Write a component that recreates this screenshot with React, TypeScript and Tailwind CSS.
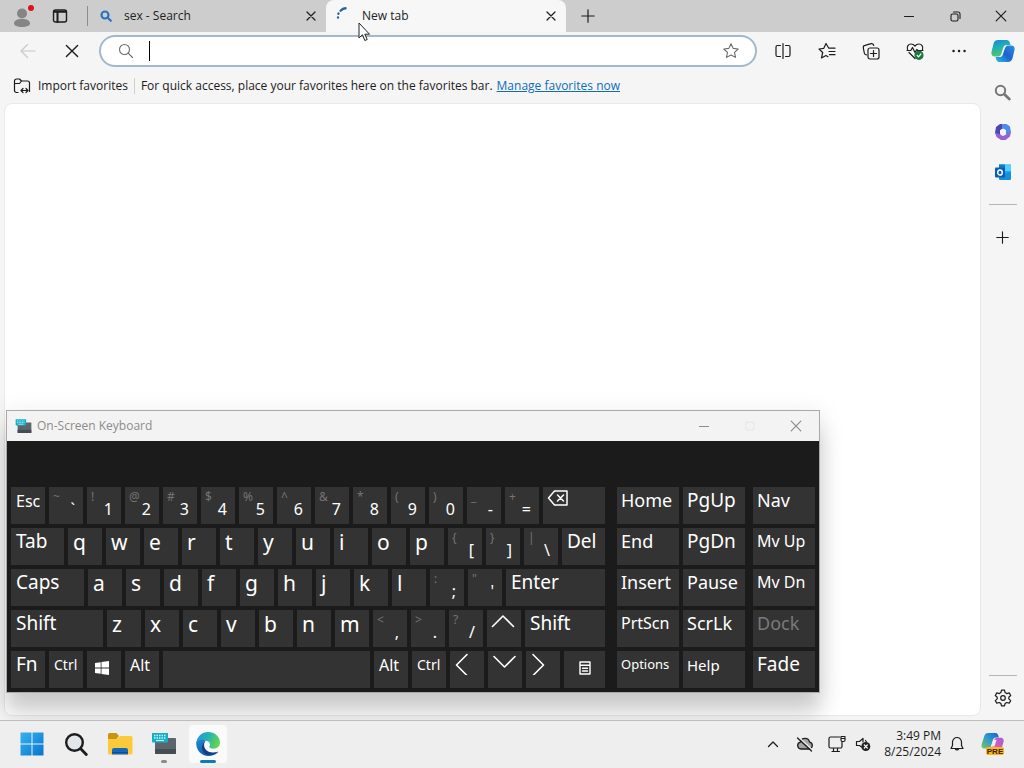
import type { ReactNode } from "react";

type IconProps = { size?: number; box?: string; sw?: number; className?: string; children: ReactNode };

function Icon({ size = 20, box, sw = 1.2, className = "", children }: IconProps) {
  return (
    <svg
      width={size}
      height={size}
      viewBox={box ?? `0 0 ${size} ${size}`}
      fill="none"
      stroke="currentColor"
      strokeWidth={sw}
      strokeLinecap="round"
      strokeLinejoin="round"
      aria-hidden="true"
      className={`shrink-0 ${className}`}
    >
      {children}
    </svg>
  );
}

const Cross = ({ size = 10, sw = 1.3 }: { size?: number; sw?: number }) => (
  <Icon size={size} box="0 0 10 10" sw={sw}>
    <path d="M1 1l8 8M9 1L1 9" />
  </Icon>
);

const Plus = ({ size = 14 }: { size?: number }) => (
  <Icon size={size} box="0 0 14 14" sw={1.2}>
    <path d="M7 .8v12.4M.8 7h12.4" />
  </Icon>
);

const STAR = "M10 2l2.400 5.100 5.600.7-4.100 3.800 1.100 5.500L10 14.400l-5 2.700 1.100-5.500L2 7.800l5.600-.7z";

const CopilotLogo = ({ size = 24 }: { size?: number }) => (
  <svg width={size} height={size} viewBox="0 0 24 24" aria-hidden="true" className="shrink-0">
    <defs>
      <linearGradient id="cpA" x1="0" y1="0" x2="0.3" y2="1">
        <stop offset="0" stopColor="#1a86d8" />
        <stop offset="0.45" stopColor="#1eaeb8" />
        <stop offset="1" stopColor="#56c46a" />
      </linearGradient>
      <linearGradient id="cpB" x1="1" y1="0" x2="0" y2="1">
        <stop offset="0" stopColor="#2e8fe0" />
        <stop offset="0.5" stopColor="#1c62d0" />
        <stop offset="1" stopColor="#2cc0f0" />
      </linearGradient>
    </defs>
    <path d="M7 1h8.500c1.800 0 2.800 1.100 3.300 2.600L19.500 6h-4c-1.700 0-2.700 1-3.200 2.600l-1.900 6.200c-.5 1.600-1.400 2.700-3.200 2.700H3.800C.8 17.500-.1 15 .6 12.500L2.500 4.700C3.100 2.400 4.600 1 7 1z" fill="url(#cpA)" />
    <path d="M17 23H8.500c-1.800 0-2.800-1.100-3.300-2.600L4.500 18h4c1.700 0 2.700-1 3.200-2.600l1.900-6.200c.5-1.600 1.400-2.700 3.200-2.700h3.400c3 0 3.900 2.500 3.200 5l-1.900 7.800c-.6 2.300-2.100 3.700-4.500 3.700z" fill="url(#cpB)" />
    <path d="M14 6.700l-2.300 6.500-2 4.400 1.600-1 2.500-7.400 2-2.700z" fill="#e9fbff" />
  </svg>
);

const CopilotPre = () => (
  <svg width="26" height="26" viewBox="0 0 26 26" aria-hidden="true">
    <defs>
      <linearGradient id="preA" x1="1" y1="0" x2="0" y2="1">
        <stop offset="0" stopColor="#1d5fc8" />
        <stop offset="0.5" stopColor="#2e9bd0" />
        <stop offset="1" stopColor="#7ac850" />
      </linearGradient>
      <linearGradient id="preB" x1="1" y1="0" x2="0" y2="1">
        <stop offset="0" stopColor="#a45ce0" />
        <stop offset="0.6" stopColor="#e060a8" />
        <stop offset="1" stopColor="#f8a040" />
      </linearGradient>
    </defs>
    <path d="M8.500 2h7c2 0 2.700 1.500 3.400 4.500h-3c-1.800 0-2.500 1-3 2.600l-2 6.200c-.5 1.500-1.300 2.200-3 2.200H4.500c-2.800 0-3.500-2.300-2.700-4.800L4.200 5.200C4.900 3 6.200 2 8.500 2z" fill="url(#preA)" />
    <path d="M17 22H10c-2 0-3-1.500-3.500-4.200h2.400c1.700 0 2.500-1 3-2.500l2-6c.5-1.600 1.300-2.500 3-2.500h3.800c2.800 0 3.400 2.400 2.700 4.800l-2.200 7.200c-.6 2-2 3.200-4.200 3.200z" fill="url(#preB)" />
    <path d="M13.500 8.500l-2.300 7h3.300l2-6.500z" fill="#f6e8ff" />
    <rect x="6" y="16" width="18" height="8" rx="2" fill="#fbb51d" />
    <text x="15" y="23" textAnchor="middle" fontFamily="Liberation Sans, sans-serif" fontWeight="700" fontSize="8" fill="#3a2400">PRE</text>
  </svg>
);

const KeyboardLogo = ({ size }: { size: number }) => (
  <svg width={size} height={size} viewBox="0 0 26 26" aria-hidden="true" className="shrink-0">
    <rect x="4" y="7" width="21" height="16" rx="1" fill="#5c646c" />
    <path d="M4 18h21v4a1 1 0 0 1-1 1H5a1 1 0 0 1-1-1z" fill="#454c54" />
    <path d="M1 2h16v8.500a1 1 0 0 1-1 1H2a1 1 0 0 1-1-1z" fill="#16aec4" />
    <path d="M3 4.500h12M3 7h12" stroke="#c9f7fb" strokeWidth="1.3" strokeDasharray="1.5 1" />
    <path d="M5 9.500h8" stroke="#c9f7fb" strokeWidth="1.2" />
  </svg>
);

const EdgeLogo = () => (
  <svg width="26" height="26" viewBox="0 0 26 26" aria-hidden="true">
    <defs>
      <linearGradient id="edA" x1="0" y1="0.2" x2="1" y2="0.5">
        <stop offset="0" stopColor="#2296dc" />
        <stop offset="0.5" stopColor="#27b4ae" />
        <stop offset="1" stopColor="#66d650" />
      </linearGradient>
      <linearGradient id="edB" x1="0" y1="0" x2="0.8" y2="1">
        <stop offset="0" stopColor="#1b8ad6" />
        <stop offset="1" stopColor="#124f9c" />
      </linearGradient>
    </defs>
    <path d="M1.200 12C2 5.500 7 1 13 1c7 0 12 5 12 10.500 0 4-3 6.200-6.500 6.200-3 0-4.600-1.200-4.200-2.200 1.200-1.200 1.200-4.500-2.300-5.500-4-1.300-8.500.2-10.800 2z" fill="url(#edA)" />
    <path d="M1.200 11.500C3.500 8.500 8 8 11 9.800c-3.300 1.500-4.200 5-2.800 8.200 1.800 4 7 5.300 12 3.600.8-.3 1.500-.5 2.200-.9.500-.2.900.2.600.6C20.500 24 17 25 13.500 25 6.500 25 1 19.500 1.200 11.500z" fill="url(#edB)" />
    <path d="M11 9.800c-2.500 2-2.500 5.700-.5 8.400 2.300 3 7 4 11 2.700-2 2.600-6.500 3.700-10.500 2.300C6 21 5 12.500 11 9.800z" fill="#123f84" />
  </svg>
);

function Tab({ title, icon, active }: { title: string; icon: ReactNode; active?: boolean }) {
  return (
    <div
      className={`flex h-8 items-center pr-[7px] pl-2 text-[12px] text-[#222] ${
        active ? "w-60 rounded-t-lg bg-[#f7f7f7]" : "w-[238px]"
      }`}
    >
      <span className="mr-2 flex w-5 justify-center">{icon}</span>
      <span className="flex-1 truncate">{title}</span>
      <button aria-label={`Close ${title}`} className="flex size-4 items-center justify-center text-[#222]">
        <Cross />
      </button>
    </div>
  );
}

function ToolButton({ label, children, className = "" }: { label: string; children: ReactNode; className?: string }) {
  return (
    <button aria-label={label} className={`flex h-8 w-11 shrink-0 items-center justify-center text-[#1d1d1d] ${className}`}>
      {children}
    </button>
  );
}

type KeyDef = {
  k?: string;
  shift?: string;
  w?: string;
  size?: string;
  icon?: ReactNode;
  label?: string;
  dim?: boolean;
  place?: string;
};

const N = "w-[34px]";
const L = "text-[21px] leading-7";
const W = "text-[19px] leading-[26px]";
const M = "text-[18px] leading-[26px]";
const S = "text-[16px] leading-[26px]";
const T = "text-[14px] leading-7";

function Key({ k, shift, w = N, size = L, icon, label, dim, place = "items-start pl-1" }: KeyDef) {
  const base = `h-[37px] shrink-0 bg-[#333333] ${w}`;
  if (icon || !k) {
    return (
      <button aria-label={label} className={`${base} flex text-white ${place}`}>
        {icon}
      </button>
    );
  }
  if (shift) {
    return (
      <button className={`${base} flex flex-col justify-start text-white`}>
        <span className="h-3.5 self-start pt-[3px] pl-1 text-[12px] leading-[14px] text-[#737373]">{shift}</span>
        <span className="self-end pr-2 text-[16px] leading-4">{k}</span>
      </button>
    );
  }
  return (
    <button
      className={`${base} flex items-start whitespace-nowrap ${w === SIDE ? "pl-1" : "pl-[5px]"} ${size} ${
        dim ? "text-[#7a7a7a]" : "text-white"
      }`}
    >
      {k}
    </button>
  );
}

const Chevron = ({ d }: { d: string }) => (
  <Icon size={24} sw={1.6}>
    <path d={d} />
  </Icon>
);

const letters = (s: string): KeyDef[] => s.split("").map((k) => ({ k }));

const rows: KeyDef[][] = [
  [
    { k: "Esc", size: "text-[16px] leading-7" },
    { k: "`", shift: "~" },
    { k: "1", shift: "!" },
    { k: "2", shift: "@" },
    { k: "3", shift: "#" },
    { k: "4", shift: "$" },
    { k: "5", shift: "%" },
    { k: "6", shift: "^" },
    { k: "7", shift: "&" },
    { k: "8", shift: "*" },
    { k: "9", shift: "(" },
    { k: "0", shift: ")" },
    { k: "-", shift: "_" },
    { k: "=", shift: "+" },
    {
      label: "Backspace",
      w: "w-[62px]",
      icon: (
        <Icon size={22} sw={1.5}>
          <path d="M7.500 4H20v14H7.500L1.500 11z M10.500 8l6 6M16.500 8l-6 6" />
        </Icon>
      ),
    },
  ],
  [
    { k: "Tab", w: "w-[53px]", size: W },
    ...letters("qwertyuiop"),
    { k: "[", shift: "{" },
    { k: "]", shift: "}" },
    { k: "\\", shift: "|" },
    { k: "Del", w: "w-[43px]", size: W },
  ],
  [
    { k: "Caps", w: "w-[73px]", size: W },
    ...letters("asdfghjkl"),
    { k: ";", shift: ":" },
    { k: "'", shift: "\"" },
    { k: "Enter", w: "w-[99px]", size: W },
  ],
  [
    { k: "Shift", w: "w-[92px]", size: W },
    ...letters("zxcvbnm"),
    { k: ",", shift: "<" },
    { k: ".", shift: ">" },
    { k: "/", shift: "?" },
    { label: "Up", icon: <Chevron d="M1.500 16.500L12 6l10.500 10.500" /> },
    { k: "Shift", w: "w-20", size: W },
  ],
  [
    { k: "Fn", size: W },
    { k: "Ctrl", size: T },
    {
      label: "Windows",
      place: "items-center justify-center pr-1 pb-1",
      icon: (
        <svg width="14" height="14" viewBox="0 0 14 14" fill="#fff" aria-hidden="true">
          <path d="M0 2l5.700-.8v5.300H0zM6.500 1L14 0v6.500H6.500zM0 7.400h5.700v5.300L0 11.900zM6.500 7.400H14V14l-7.500-1.100z" />
        </svg>
      ),
    },
    { k: "Alt", size: "text-[16px] leading-7" },
    { label: "Space", w: "w-[207px]" },
    { k: "Alt", size: "text-[16px] leading-7" },
    { k: "Ctrl", size: T },
    { label: "Left", icon: <Chevron d="M13 3.500L2.500 14 13 24.500" /> },
    { label: "Down", icon: <Chevron d="M2 5.500L12.500 16 23 5.500" /> },
    { label: "Right", icon: <Chevron d="M3 3.500L13.500 14 3 24.500" /> },
    {
      label: "Menu",
      w: "w-[41px]",
      place: "items-center justify-center pb-1",
      icon: (
        <Icon size={14} sw={1.4}>
          <path d="M2 1h10v12H2zM2 4.200h10M4.500 7.200h5M4.500 10h5" />
        </Icon>
      ),
    },
  ],
];

const SIDE = "w-[62px]";
const sideRows: KeyDef[][] = [
  [{ k: "Home", w: SIDE, size: M }, { k: "PgUp", w: SIDE, size: W }, { k: "Nav", w: SIDE, size: M }],
  [{ k: "End", w: SIDE, size: M }, { k: "PgDn", w: SIDE, size: W }, { k: "Mv Up", w: SIDE, size: S }],
  [{ k: "Insert", w: SIDE, size: M }, { k: "Pause", w: SIDE, size: M }, { k: "Mv Dn", w: SIDE, size: S }],
  [{ k: "PrtScn", w: SIDE, size: S }, { k: "ScrLk", w: SIDE, size: M }, { k: "Dock", w: SIDE, size: M, dim: true }],
  [
    { k: "Options", w: SIDE, size: "text-[13px] leading-[26px]" },
    { k: "Help", w: SIDE, size: "text-[15px] leading-7" },
    { k: "Fade", w: SIDE, size: W },
  ],
];

function OnScreenKeyboard() {
  return (
    <section
      aria-label="On-Screen Keyboard"
      className="absolute top-[410px] left-[6px] z-10 border border-[#a9a9a9] shadow-[0_20px_20px_0_rgba(0,0,0,0.17),0_4px_24px_2px_rgba(0,0,0,0.08)]"
    >
      <header className="flex h-[30px] items-center bg-[#f3f3f3] pl-2 text-[12px] text-[#8c8c8c]">
        <KeyboardLogo size={17} />
        <h2 className="ml-[5px] flex-1">On-Screen Keyboard</h2>
        <button aria-label="Minimize" className="flex h-full w-[46px] items-center justify-center">
          <Icon size={10} sw={1}>
            <path d="M0 5.500h10" />
          </Icon>
        </button>
        <button aria-label="Maximize" disabled className="flex h-full w-[46px] items-center justify-center text-[#e6e6e6]">
          <Icon size={10} sw={1}>
            <rect x="1" y="1" width="8" height="8" rx="1" />
          </Icon>
        </button>
        <button aria-label="Close keyboard" className="flex h-full w-[46px] items-center justify-center">
          <Cross size={12} sw={1} />
        </button>
      </header>
      <div className="flex flex-col gap-1 bg-[#1b1b1b] px-1 pt-[46px] pb-1 font-['Noto_Sans',sans-serif]">
        {rows.map((row, r) => (
          <div key={r} className="flex">
            <div className="flex gap-1">
              {row.map((key, i) => (
                <Key key={i} {...key} />
              ))}
            </div>
            <div className="ml-auto flex gap-1 pl-3">
              <Key {...sideRows[r][0]} />
              <Key {...sideRows[r][1]} />
              <div className="pl-1">
                <Key {...sideRows[r][2]} />
              </div>
            </div>
          </div>
        ))}
      </div>
    </section>
  );
}

function TabStrip() {
  return (
    <header className="flex h-8 items-center bg-[#cdcdcd] text-[#1d1d1d]">
      <button aria-label="Profile" className="flex h-8 w-[42px] items-center justify-center pl-0.5">
        <svg width="24" height="24" viewBox="0 0 24 24" aria-hidden="true">
          <circle cx="12" cy="9.500" r="5" fill="#858585" />
          <path d="M4 19.500c0-3.300 3.500-4.500 8-4.500s8 1.200 8 4.500c0 1.800-3 3.500-8 3.500s-8-1.700-8-3.500z" fill="#858585" />
          <circle cx="21" cy="4" r="3" fill="#e0101c" />
        </svg>
      </button>
      <button aria-label="Tab actions" className="flex h-8 w-9 items-center justify-center">
        <Icon size={16} sw={1.4}>
          <rect x="1.500" y="2" width="13" height="12" rx="2" />
          <path d="M2 3.800h12M5.500 4v10" strokeWidth="2" />
        </Icon>
      </button>
      <div className="ml-[9px] h-5 w-px bg-[#8d8d8d]" />
      <Tab
        title="sex - Search"
        icon={
          <Icon size={12} sw={2.2} className="text-[#2f72c0]">
            <circle cx="5" cy="5" r="3.500" />
            <path d="M7.800 7.800l3 3" />
          </Icon>
        }
      />
      <Tab
        active
        title="New tab"
        icon={
          <Icon size={16} sw={2.4} className="mb-1 text-[#2a6494]">
            <path d="M2 11.500v.1M2.400 7.800l.1-.2M4.600 4.700C6 3.200 7.500 2.400 9.500 2.300" />
          </Icon>
        }
      />
      <button aria-label="New tab" className="ml-1 flex h-8 w-9 items-center justify-center">
        <Plus />
      </button>
      <div className="ml-auto flex h-8">
        <button aria-label="Minimize" className="flex w-[46px] items-center justify-center">
          <Icon size={10} sw={1.1}>
            <path d="M.5 5.500h9" />
          </Icon>
        </button>
        <button aria-label="Restore" className="flex w-[46px] items-center justify-center">
          <Icon size={11} sw={1.1}>
            <rect x="1" y="3" width="7" height="7" rx="1.500" />
            <path d="M3.500 1H8a2 2 0 0 1 2 2v4.500" />
          </Icon>
        </button>
        <button aria-label="Close" className="flex w-[46px] items-center justify-center">
          <Cross size={12} sw={1} />
        </button>
      </div>
    </header>
  );
}

function Toolbar() {
  return (
    <div className="flex h-[38px] items-center pl-1.5">
      <ToolButton label="Back" className="opacity-20">
        <Icon size={16} sw={1.2}>
          <path d="M15 8H1M7.500 1.500L1 8l6.500 6.500" />
        </Icon>
      </ToolButton>
      <ToolButton label="Stop">
        <Cross size={14} sw={1} />
      </ToolButton>
      <div className="mr-1 ml-[5px] flex h-8 flex-1 items-center rounded-full border-2 border-[#a3b8cc] bg-white pr-[15px] pl-[17px] text-[#6b6b6b]">
        <Icon size={16} sw={1.1}>
          <circle cx="6.500" cy="6.500" r="5" />
          <path d="M10.200 10.200L14.500 14.500" />
        </Icon>
        <span className="ml-[15px] h-5 w-px bg-black" />
        <input aria-label="Address and search bar" className="h-6 min-w-0 flex-1 bg-transparent text-[14px] outline-none" />
        <button aria-label="Add to favorites">
          <Icon size={18} box="0 0 20 20">
            <path d={STAR} />
          </Icon>
        </button>
      </div>
      <ToolButton label="Split screen">
        <Icon size={18} sw={1.2}>
          <path d="M6.500 3.500h-3a1.500 1.500 0 0 0-1.500 1.500v8a1.500 1.500 0 0 0 1.500 1.500h3M11.500 3.500h3A1.500 1.500 0 0 1 16 5v8a1.500 1.500 0 0 1-1.500 1.500h-3M9 1.500v15" />
        </Icon>
      </ToolButton>
      <ToolButton label="Favorites">
        <Icon size={18} sw={1.2}>
          <path d="M17 6.200h-6.200L8 1.500 5.800 6.300 1 7l3.700 3.500L3.500 16 8 13.500l2 1.200M11 9.500h6M11.500 12.700H17" />
        </Icon>
      </ToolButton>
      <ToolButton label="Collections">
        <Icon size={18} sw={1.2}>
          <rect x="6" y="6" width="11" height="11" rx="2" />
          <path d="M11.500 8.500v6M8.500 11.500h6M4.500 12.800A2.200 2.200 0 0 1 2.300 11L1.300 5.800a2.200 2.200 0 0 1 1.800-2.500l6-1.600a2.200 2.200 0 0 1 2.600 1.800" />
        </Icon>
      </ToolButton>
      <ToolButton label="Browser essentials">
        <Icon size={18} sw={1.2}>
          <path d="M1.500 7.500C.6 4.500 2.400 2 5 2c1.700 0 3 .8 4 2 1-1.200 2.300-2 4-2 2.600 0 4.400 2.500 3.500 5.500M1 8.500h3.800l1.700-3 2.500 5 1.800-3 .9 1H17M3 10.500l6 6" />
          <circle cx="13" cy="13.300" r="4" fill="#187a3d" stroke="#187a3d" />
          <path d="M11.200 13.500l1.300 1.300 2.400-2.800" stroke="#fff" />
        </Icon>
      </ToolButton>
      <ToolButton label="Settings and more">
        <Icon size={16} sw={2.4}>
          <path d="M2.500 8h.1M8 8h.1M13.500 8h.1" />
        </Icon>
      </ToolButton>
    </div>
  );
}

function FavoritesBar() {
  return (
    <div className="flex h-[33px] items-center pb-0.5 pl-[13px] text-[12px] whitespace-nowrap text-[#1b1b1b]">
      <button className="flex items-center gap-[7px]">
        <Icon size={18} sw={1.2}>
          <path d="M5 15.500H3.500A2 2 0 0 1 1.500 13.500V4a2 2 0 0 1 2-2h3l2 2h6a2 2 0 0 1 2 2v8.500M1.500 6.500h5l2-2.500M8 13.500h7M10 11.500l-2 2 2 2M13 11.500l2 2-2 2" />
        </Icon>
        Import favorites
      </button>
      <span className="mx-1.5 h-4 w-px bg-[#d0d0d0]" />
      <span>For quick access, place your favorites here on the favorites bar.</span>
      <a href="#favorites" className="ml-1 text-[#0f6cbd] underline">
        Manage favorites now
      </a>
    </div>
  );
}

function SideBar() {
  return (
    <aside className="flex w-[43px] shrink-0 flex-col items-center pt-[3px]">
      <ToolButton label="Copilot">
        <CopilotLogo />
      </ToolButton>
      <div className="mt-[9px] flex flex-col gap-2">
        <ToolButton label="Search">
          <Icon size={17} sw={2} className="text-[#777]">
            <circle cx="6.500" cy="6.500" r="4.700" />
            <path d="M10.300 10.300l5 4.700" strokeWidth="2.8" />
          </Icon>
        </ToolButton>
        <ToolButton label="Microsoft 365">
          <svg width="18" height="18" viewBox="0 0 18 18" aria-hidden="true">
            <path d="M9.500 1H6L2 4 1 10l2 3 3.500-1.500V7L12 4z" fill="#4c46b4" />
            <path d="M8 1h4.500L16 3.500l1 6-3 3-2.500-1.500V7L8 5z" fill="#4a8ee6" />
            <path d="M17 8.500l-1 5L11.500 17H7l-4.500-3L1 9.500 6 11.500 9 13l4-2z" fill="#9a5fd6" />
            <path d="M9 5.500l3 1.700v3.600l-3 1.700-3-1.700V7.200z" fill="#f4f3ff" />
          </svg>
        </ToolButton>
        <ToolButton label="Outlook">
          <svg width="18" height="18" viewBox="0 0 18 18" aria-hidden="true">
            <path d="M5 1.500h11a1 1 0 0 1 1 1V16H5z" fill="#28a8ea" />
            <path d="M11 1.500h6V8h-6z" fill="#50d0ff" />
            <path d="M5 1.500h6V8H5z" fill="#0f78d4" />
            <path d="M5 11l12-2v7a1 1 0 0 1-1 1H6a1 1 0 0 1-1-1z" fill="#1490df" />
            <rect x="1" y="4.500" width="10" height="10" rx="1" fill="#0a5eb0" />
            <ellipse cx="6" cy="9.500" rx="2.300" ry="2.600" fill="none" stroke="#fff" strokeWidth="1.5" />
          </svg>
        </ToolButton>
      </div>
      <span className="mt-4 h-px w-7 bg-[#b5b5b5]" />
      <ToolButton label="Customize" className="mt-4">
        <Plus size={13} />
      </ToolButton>
      <span className="mt-auto h-px w-7 bg-[#b5b5b5]" />
      <ToolButton label="Settings" className="mt-1.5 mb-1.5">
        <Icon size={18} sw={1.2}>
          <circle cx="9" cy="9" r="2.300" />
          <path d="M7.500 1.200h3l.6 2.400 1.600 1 2.500-.7 1.500 2.600-1.900 1.700v1.700l1.900 1.700-1.500 2.600-2.500-.7-1.600 1-.6 2.400h-3l-.6-2.400-1.600-1-2.500.7-1.500-2.600 1.900-1.700V8.200L1.300 6.500l1.500-2.600 2.500.7 1.600-1z" />
        </Icon>
      </ToolButton>
    </aside>
  );
}

function TaskButton({ label, children, active }: { label: string; children: ReactNode; active?: boolean }) {
  return (
    <button
      aria-label={label}
      className={`relative flex size-[38px] items-center justify-center rounded ${active ? "bg-[#fafafa]" : ""}`}
    >
      {children}
    </button>
  );
}

function Taskbar() {
  return (
    <footer className="relative z-20 flex h-12 items-center border-t border-[#bdbdbd] bg-[#eeeeee] pr-[18px] pb-px pl-[13px] text-[#1d1d1d]">
      <nav className="flex gap-1.5" aria-label="Taskbar">
        <TaskButton label="Start">
          <svg width="24" height="24" viewBox="0 0 24 24" aria-hidden="true">
            <defs>
              <linearGradient id="winG" x1="0" y1="0" x2="1" y2="1">
                <stop offset="0" stopColor="#35b4ee" />
                <stop offset="1" stopColor="#0873cf" />
              </linearGradient>
            </defs>
            <path d="M.5.5h11v11H.5zM12.500.5h11v11h-11zM.5 12.500h11v11H.5zM12.500 12.500h11v11h-11z" fill="url(#winG)" />
          </svg>
        </TaskButton>
        <TaskButton label="Search">
          <Icon size={24} sw={2.4}>
            <circle cx="10.500" cy="10.500" r="8.300" fill="#e3e7e9" />
            <path d="M16.700 16.700l5.600 5.800" strokeWidth="2.8" />
          </Icon>
        </TaskButton>
        <TaskButton label="File Explorer">
          <svg width="26" height="26" viewBox="0 0 26 26" aria-hidden="true">
            <path d="M1 3.500A1.500 1.500 0 0 1 2.500 2h7l2.500 3-2.500 3H1z" fill="#c99510" />
            <path d="M1 8h9l3-3h11a1.500 1.500 0 0 1 1.500 1.500V22a1.500 1.500 0 0 1-1.500 1.500H2.500A1.500 1.500 0 0 1 1 22z" fill="#fcc93a" />
            <path d="M5 23.500V19a2 2 0 0 1 2-2h12a2 2 0 0 1 2 2v4.500z" fill="#1668b8" />
            <path d="M5 21.500h16" stroke="#0e4d8c" />
          </svg>
        </TaskButton>
        <TaskButton label="On-Screen Keyboard">
          <KeyboardLogo size={26} />
          <span className="absolute bottom-0 h-[3px] w-1.5 rounded-full bg-[#8b8b8b]" />
        </TaskButton>
        <TaskButton label="Microsoft Edge" active>
          <EdgeLogo />
          <span className="absolute bottom-0 h-[3px] w-4 rounded-full bg-[#0f7ab8]" />
        </TaskButton>
      </nav>
      <div className="ml-auto flex items-center">
        <button aria-label="Show hidden icons" className="flex w-8 justify-center">
          <Icon size={12} sw={1.3}>
            <path d="M1.500 8.500L6 4l4.500 4.500" />
          </Icon>
        </button>
        <button aria-label="OneDrive" className="flex w-8 justify-center">
          <Icon size={18} sw={1.3}>
            <path d="M5 14a3.500 3.500 0 0 1-.6-6.900 4.700 4.700 0 0 1 9.200 0A3.500 3.500 0 0 1 13 14z" fill="#a6a6a6" />
            <path d="M2.500 2l14 13" stroke="#eee" strokeWidth="1.4" />
            <path d="M1.500 3l14 13" />
          </Icon>
        </button>
        <button aria-label="Network" className="flex w-8 justify-center">
          <Icon size={18} sw={1.2}>
            <path d="M11.500 2H2.500A1.500 1.500 0 0 0 1 3.500v8A1.500 1.500 0 0 0 2.500 13h10a1.500 1.500 0 0 0 1.500-1.500V7M5.500 13v3M9.500 13v3M4 16.500h7.500M13 1.500h4v3.500a1.500 1.500 0 0 1-1.500 1.500h-1A1.500 1.500 0 0 1 13 5zM13 3.500h4" />
          </Icon>
        </button>
        <button aria-label="Volume muted" className="flex w-5 justify-center">
          <Icon size={16} sw={1.2}>
            <path d="M6.500 11L4.500 9.500H1.500V5.500h3L8 2.500v3.500M10.500 4.500l1 1.500" />
            <circle cx="10.800" cy="10.500" r="4.500" fill="#222" stroke="none" />
            <path d="M9.300 9l3 3M12.300 9l-3 3" stroke="#fff" />
          </Icon>
        </button>
        <time className="ml-2.5 flex w-[58px] flex-col text-right text-[12px] leading-4 whitespace-nowrap">
          <span>3:49 PM</span>
          <span>8/25/2024</span>
        </time>
        <button aria-label="Notifications" className="flex w-[31px] justify-center">
          <Icon size={16} sw={1.2}>
            <path d="M8 1.500A4.500 4.500 0 0 0 3.500 6v3.500L2 12.500h12L12.500 9.500V6A4.500 4.500 0 0 0 8 1.500zM6.300 12.700a1.800 1.800 0 0 0 3.400 0" />
          </Icon>
        </button>
        <button aria-label="Copilot preview" className="ml-2">
          <CopilotPre />
        </button>
      </div>
    </footer>
  );
}

export default function App() {
  return (
    <div className="relative flex min-h-screen flex-col overflow-hidden bg-[#f5f5f5] font-['Open_Sans','Noto_Sans',sans-serif]">
      <TabStrip />
      <div className="flex flex-1">
        <div className="flex min-w-0 flex-1 flex-col">
          <Toolbar />
          <FavoritesBar />
          <main className="mb-1 ml-1 flex-1 rounded-lg border border-[#e9e9e9] bg-white" />
        </div>
        <SideBar />
      </div>
      <OnScreenKeyboard />
      <Taskbar />
      <svg width="13" height="20" viewBox="0 0 13 20" aria-hidden="true" className="absolute top-[22px] left-[358px] z-30">
        <path d="M1 1v15l3.500-3.300L6.800 18.500l2.400-1-2.400-5.300h4.700z" fill="#fff" stroke="#222" />
      </svg>
    </div>
  );
}
